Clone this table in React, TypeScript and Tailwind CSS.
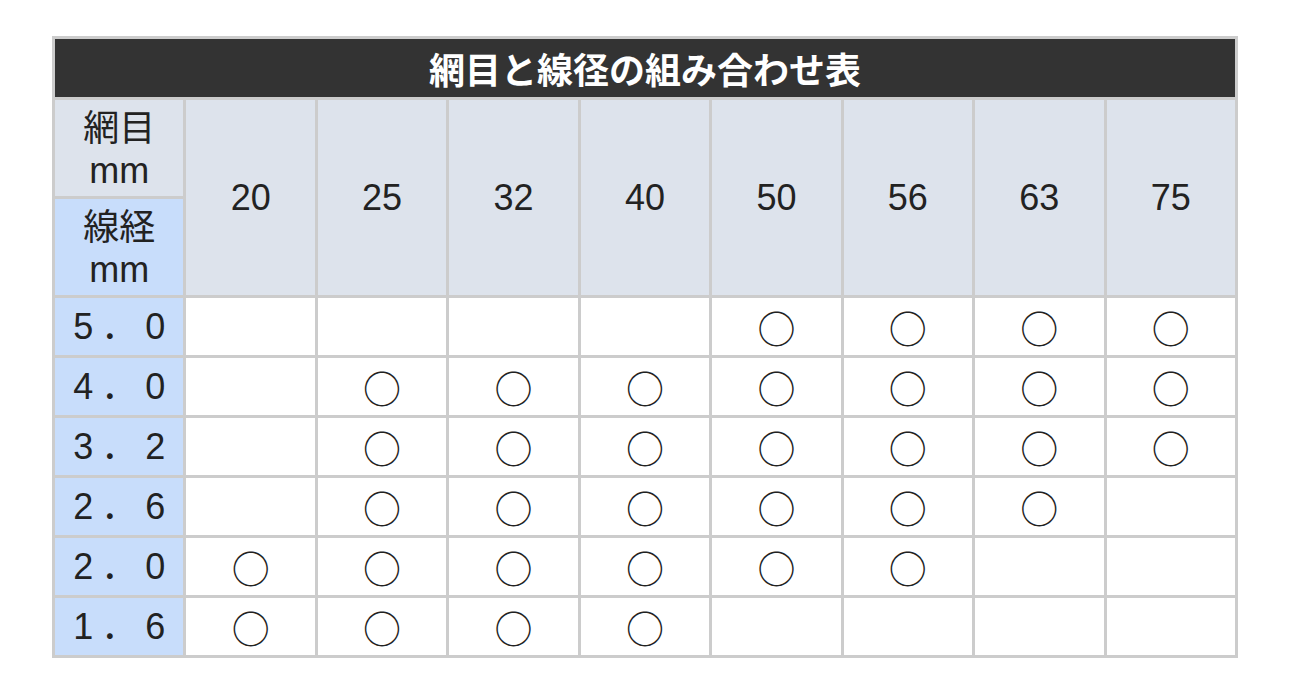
import React from "react";

const cols = ["20", "25", "32", "40", "50", "56", "63", "75"];
const rows: { label: string; marks: boolean[] }[] = [
  { label: "5．0", marks: [false, false, false, false, true, true, true, true] },
  { label: "4．0", marks: [false, true, true, true, true, true, true, true] },
  { label: "3．2", marks: [false, true, true, true, true, true, true, true] },
  { label: "2．6", marks: [false, true, true, true, true, true, true, false] },
  { label: "2．0", marks: [true, true, true, true, true, true, false, false] },
  { label: "1．6", marks: [true, true, true, true, false, false, false, false] },
];

const cell = "border-[3px] border-[#cccccc] p-0 text-center";
const jp = "font-['Noto_Sans_CJK_JP',sans-serif]";

export default function App() {
  return (
    <div className="w-[1290px] h-[691px] bg-white pt-[36px] pl-[52px] font-['Liberation_Sans','Noto_Sans_CJK_JP',sans-serif]">
      <table className="table-fixed border-collapse w-[1186px] text-[36px] text-[#222]">
        <tbody>
          <tr>
            <td
              colSpan={9}
              className={`${cell} h-[61px] bg-[#333333] text-white font-bold leading-none ${jp}`}
            >
              網目と線径の組み合わせ表
            </td>
          </tr>
          <tr>
            <td className={`${cell} w-[131px] h-[99px] bg-[#dde3ec] leading-[45px]`}>
              <div className={jp}>網目</div>
              <div>mm</div>
            </td>
            {cols.map((c) => (
              <td key={c} rowSpan={2} className={`${cell} bg-[#dde3ec]`}>
                {c}
              </td>
            ))}
          </tr>
          <tr>
            <td className={`${cell} h-[99px] bg-[#c8ddfb] leading-[45px]`}>
              <div className={jp}>線経</div>
              <div>mm</div>
            </td>
          </tr>
          {rows.map((r, ri) => (
            <tr key={ri}>
              <td className={`${cell} h-[60px] bg-[#c8ddfb] leading-none`}>
                <span className="inline-block tracking-[8px] mr-[-8px]">{r.label}</span>
              </td>
              {r.marks.map((m, i) => (
                <td key={i} className={`${cell} bg-white leading-none text-[38px] ${jp}`}>
                  {m ? "○" : ""}
                </td>
              ))}
            </tr>
          ))}
        </tbody>
      </table>
    </div>
  );
}
